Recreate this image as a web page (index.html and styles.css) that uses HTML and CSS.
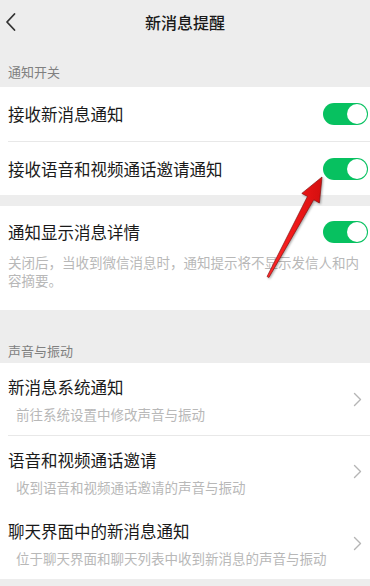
FILE: index.html
```html
<!DOCTYPE html>
<html lang="zh-CN">
<head>
<meta charset="utf-8">
<title>新消息提醒</title>
<link rel="stylesheet" href="styles.css">
</head>
<body>
<div class="page">
  <header class="topbar">
    <span class="back">
      <svg width="12" height="20" viewBox="0 0 12 20"><path d="M9.5 2 L2 10 L9.5 18" fill="none" stroke="#333" stroke-width="1.8" stroke-linecap="round" stroke-linejoin="round"/></svg>
    </span>
    <h1 class="title">新消息提醒</h1>
    <span></span>
  </header>

  <div class="label first">通知开关</div>
  <section class="card">
    <div class="row">
      <span class="row-title">接收新消息通知</span>
      <span class="switch"><span class="knob"></span></span>
    </div>
    <div class="row">
      <span class="row-title">接收语音和视频通话邀请通知</span>
      <span class="switch"><span class="knob"></span></span>
    </div>
  </section>

  <section class="card detail">
    <div class="detail-head">
      <span class="row-title">通知显示消息详情</span>
      <span class="switch"><span class="knob"></span></span>
    </div>
    <p class="desc">关闭后，当收到微信消息时，通知提示将不显示发信人和内容摘要。</p>
  </section>

  <div class="label second">声音与振动</div>
  <section class="card">
    <div class="link">
      <div class="link-text">
        <div class="row-title">新消息系统通知</div>
        <div class="sub">前往系统设置中修改声音与振动</div>
      </div>
      <svg class="chev" width="9" height="15" viewBox="0 0 9 15"><path d="M1.5 1.5 L7.5 7.5 L1.5 13.5" fill="none" stroke="#b5b5b5" stroke-width="1.4" stroke-linecap="round" stroke-linejoin="round"/></svg>
    </div>
    <div class="link bordered">
      <div class="link-text">
        <div class="row-title">语音和视频通话邀请</div>
        <div class="sub">收到语音和视频通话邀请的声音与振动</div>
      </div>
      <svg class="chev" width="9" height="15" viewBox="0 0 9 15"><path d="M1.5 1.5 L7.5 7.5 L1.5 13.5" fill="none" stroke="#b5b5b5" stroke-width="1.4" stroke-linecap="round" stroke-linejoin="round"/></svg>
    </div>
    <div class="link">
      <div class="link-text">
        <div class="row-title">聊天界面中的新消息通知</div>
        <div class="sub">位于聊天界面和聊天列表中收到新消息的声音与振动</div>
      </div>
      <svg class="chev" width="9" height="15" viewBox="0 0 9 15"><path d="M1.5 1.5 L7.5 7.5 L1.5 13.5" fill="none" stroke="#b5b5b5" stroke-width="1.4" stroke-linecap="round" stroke-linejoin="round"/></svg>
    </div>
  </section>

  <svg class="arrow" width="370" height="586" viewBox="0 0 370 586">
    <defs>
      <linearGradient id="ag" x1="0" y1="0" x2="1" y2="0">
        <stop offset="0" stop-color="#ff2a2a"/>
        <stop offset="0.5" stop-color="#f01818"/>
        <stop offset="1" stop-color="#d40f0f"/>
      </linearGradient>
    </defs>
    <polygon points="322,177 319.4,202.9 313.7,199.8 268.9,277.5 267.1,276.5 307.5,196.4 301.8,193.4" fill="url(#ag)" stroke="#8a1010" stroke-width="0.7" stroke-linejoin="round"/>
  </svg>
</div>
</body>
</html>
```

FILE: styles.css
```css
* { box-sizing: border-box; }

html, body {
  margin: 0;
  padding: 0;
  background: #ededed;
}

body {
  font-family: "Noto Sans CJK SC", "Noto Sans", sans-serif;
  color: #1a1a1a;
}

.page {
  position: relative;
  width: 370px;
  min-height: 586px;
  background: #ededed;
}

.topbar {
  display: grid;
  grid-template-columns: 44px 1fr 44px;
  align-items: center;
  height: 44px;
}

.back {
  display: flex;
  align-items: center;
  padding-left: 5px;
  height: 44px;
}

.title {
  margin: 0;
  text-align: center;
  font-size: 16px;
  font-weight: 500;
  color: #1a1a1a;
  line-height: 22px;
}

.label {
  padding-left: 8px;
  font-size: 13px;
  line-height: 18px;
  color: #808080;
}

.label.first {
  padding-top: 19px;
  padding-bottom: 6px;
}

.label.second {
  padding-top: 32px;
  padding-bottom: 3px;
}

.card {
  background: #fff;
}

.row {
  display: flex;
  align-items: center;
  justify-content: space-between;
  height: 54px;
  margin-left: 8px;
  padding-right: 2px;
}

.row + .row {
  border-top: 1px solid #e8e8e8;
}

.row-title {
  font-size: 16.5px;
  line-height: 22px;
  color: #1a1a1a;
  white-space: nowrap;
}

.switch {
  position: relative;
  display: inline-block;
  width: 45px;
  height: 22px;
  border-radius: 11px;
  background: #07c160;
}

.knob {
  position: absolute;
  right: 1px;
  top: 1px;
  width: 20px;
  height: 20px;
  border-radius: 50%;
  background: #fff;
}

.detail {
  margin-top: 11px;
  padding: 15px 2px 21px 8px;
}

.detail-head {
  display: flex;
  align-items: center;
  justify-content: space-between;
  height: 22px;
}

.desc {
  margin: 10px 0 0;
  padding-right: 6px;
  font-size: 13.5px;
  line-height: 18px;
  color: #b8b8b8;
}

.link {
  display: flex;
  align-items: center;
  justify-content: space-between;
  height: 72px;
  margin-left: 8px;
  padding-right: 8px;
}

.link.bordered {
  border-top: 1px solid #e8e8e8;
}

.link-text {
  display: flex;
  flex-direction: column;
  gap: 6px;
  padding-top: 2px;
}

.sub {
  margin-left: 8px;
  font-size: 13.5px;
  line-height: 20px;
  color: #b8b8b8;
  white-space: nowrap;
}

.chev {
  flex: none;
}

.arrow {
  position: absolute;
  left: 0;
  top: 0;
  pointer-events: none;
  filter: drop-shadow(1px 1px 1px rgba(0,0,0,0.35));
}
```
